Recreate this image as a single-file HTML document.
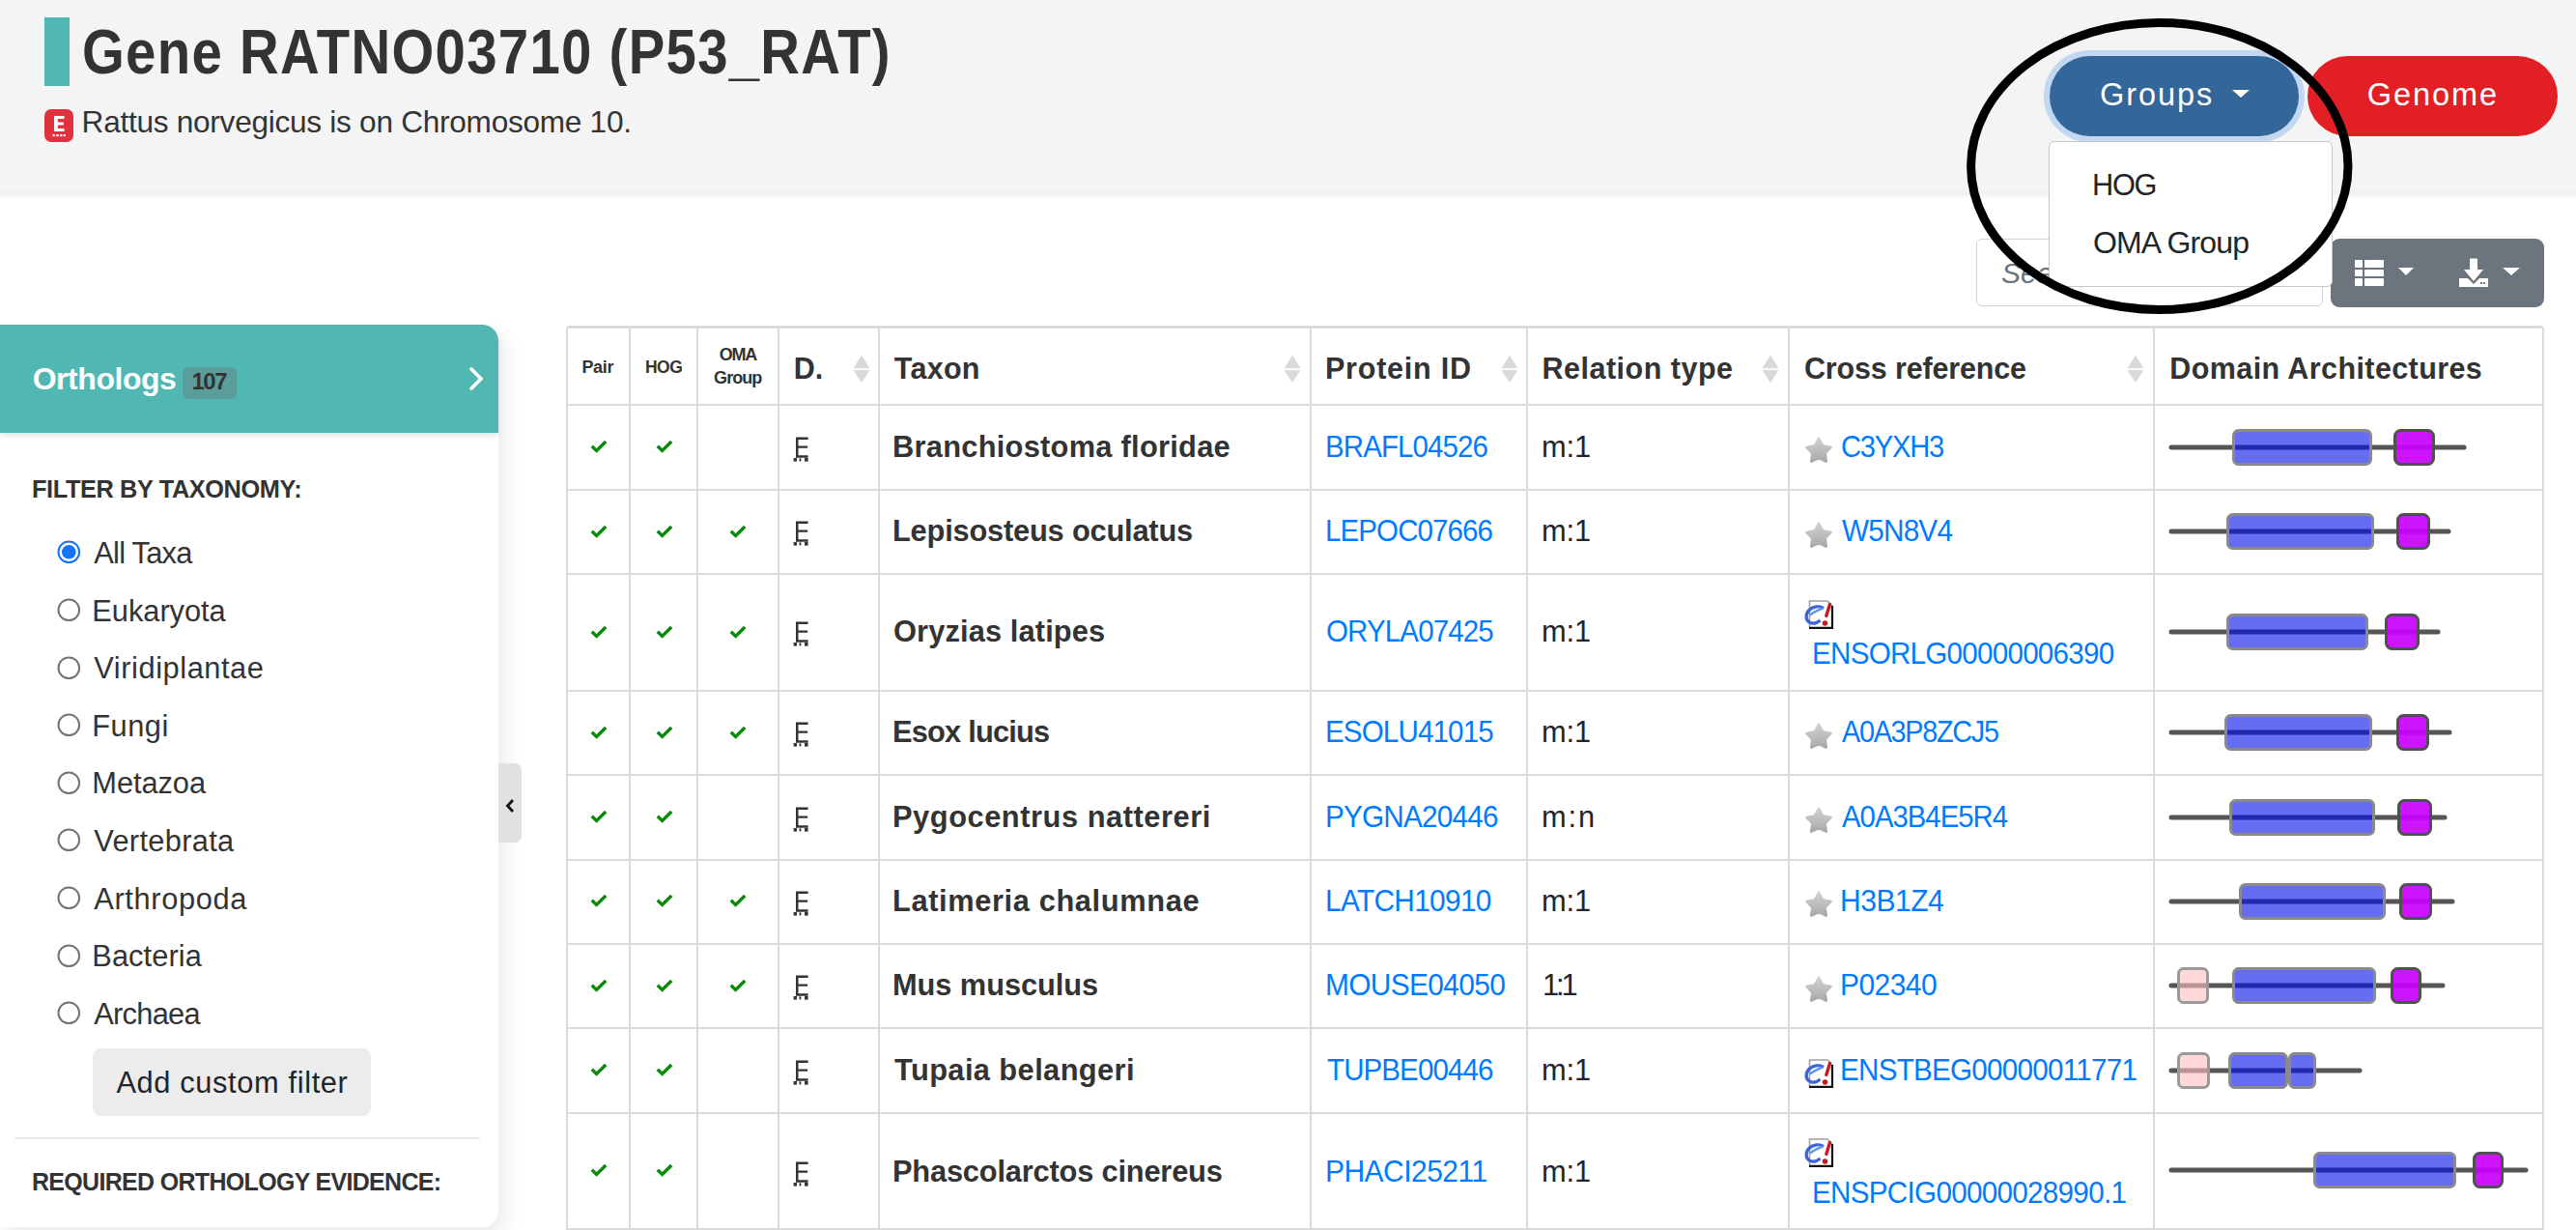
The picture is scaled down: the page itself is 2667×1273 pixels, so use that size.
<!DOCTYPE html>
<html><head><meta charset="utf-8"><title>Gene RATNO03710 (P53_RAT)</title>
<style>
html,body{margin:0;padding:0;width:2667px;height:1273px;overflow:hidden;background:#fff;}
#root{position:relative;width:2667px;height:1273px;overflow:hidden;background:#fff;font-family:"Liberation Sans",sans-serif;}
.t{position:absolute;line-height:1;white-space:nowrap;}
.b{position:absolute;}
svg{display:block;overflow:visible;}
</style></head><body><div id="root">
<div class="b" style="left:0px;top:0px;width:2667px;height:197px;background:#f4f4f4;"></div>
<div class="b" style="left:0px;top:197px;width:2667px;height:9px;background:linear-gradient(#f1f1f1,#f2f2f2 45%,#ffffff);"></div>
<div class="b" style="left:46px;top:18px;width:26px;height:71px;background:#51b7b2;"></div>
<div class="t" style="left:84.84px;top:22.42px;font-size:64px;font-weight:bold;color:#333;letter-spacing:1.476px;transform:scaleX(0.8800);transform-origin:0 0;">Gene RATNO03710 (P53_RAT)</div>
<div class="b" style="left:46px;top:113px;width:30px;height:34px;background:#e0313f;border-radius:7px;"></div>
<div class="b" style="left:53px;top:118px;width:16px;height:26px;"><svg width="16" height="26" viewBox="0 0 16 26"><path d="M3 2 H13.5 V5 H6.8 V8.6 H12.8 V11.4 H6.8 V15 H13.5 V18 H3 Z" fill="#fff"/><rect x="1.6" y="21" width="2.2" height="2.2" fill="#fff"/><rect x="5.4" y="21" width="2.2" height="2.2" fill="#fff"/><rect x="9.2" y="21" width="2.2" height="2.2" fill="#fff"/><rect x="12.6" y="21" width="2.2" height="2.2" fill="#fff"/></svg></div>
<div class="t" style="left:84.60px;top:111.05px;font-size:31.6px;color:#333;letter-spacing:-0.273px;">Rattus norvegicus is on Chromosome 10.</div>
<div class="b" style="left:2116px;top:52px;width:270px;height:94.5px;background:#c2d7f2;border-radius:47px;"></div>
<div class="b" style="left:2122px;top:58px;width:258px;height:82.5px;background:#336699;border-radius:41.25px;"></div>
<div class="t" style="left:2173.90px;top:82.29px;font-size:32.5px;color:#fff;letter-spacing:1.955px;">Groups</div>
<div class="b" style="left:2311px;top:93px;width:0;height:0;border-left:9.5px solid transparent;border-right:9.5px solid transparent;border-top:8px solid #fff;"></div>
<div class="b" style="left:2389px;top:57.5px;width:259px;height:83.5px;background:#e31f26;border-radius:41.75px;"></div>
<div class="t" style="left:2450.80px;top:82.29px;font-size:32.5px;color:#fff;letter-spacing:1.925px;">Genome</div>
<div class="b" style="left:2046px;top:247px;width:357px;height:68px;background:#fff;border:1px solid #ced4da;border-radius:6px;box-sizing:content-box;"></div>
<div class="t" style="left:2072.00px;top:267.61px;font-size:30px;font-style:italic;color:#6c757d;">Search</div>
<div class="b" style="left:2413px;top:247px;width:221px;height:71px;background:#6c757d;border-radius:9px;"></div>
<div class="b" style="left:2438px;top:269px;width:8px;height:8px;background:#fff;border-radius:1px;"></div>
<div class="b" style="left:2448px;top:269px;width:20px;height:8px;background:#fff;border-radius:1px;"></div>
<div class="b" style="left:2438px;top:279px;width:8px;height:7px;background:#fff;border-radius:1px;"></div>
<div class="b" style="left:2448px;top:279px;width:20px;height:7px;background:#fff;border-radius:1px;"></div>
<div class="b" style="left:2438px;top:288px;width:8px;height:8px;background:#fff;border-radius:1px;"></div>
<div class="b" style="left:2448px;top:288px;width:20px;height:8px;background:#fff;border-radius:1px;"></div>
<div class="b" style="left:2483px;top:277px;width:0;height:0;border-left:8.5px solid transparent;border-right:8.5px solid transparent;border-top:8px solid #fff;"></div>
<div class="b" style="left:2546px;top:267px;width:31px;height:31px;"><svg width="31" height="31" viewBox="0 0 31 31"><rect x="11" y="0.5" width="8" height="13" rx="1" fill="#fff"/><path d="M5 12 H25 L15 24 Z" fill="#fff"/><path d="M0 21 H9 L15 27 L21 21 H30 V30 H0 Z" fill="#fff"/><rect x="22" y="25" width="2" height="2" fill="#6c757d"/><rect x="25" y="25" width="2" height="2" fill="#6c757d"/></svg></div>
<div class="b" style="left:2591px;top:277px;width:0;height:0;border-left:9px solid transparent;border-right:9px solid transparent;border-top:8px solid #fff;"></div>
<div class="b" style="left:0px;top:336px;width:516px;height:934px;background:#fff;border-radius:0 17px 17px 0;box-shadow:6px 10px 22px rgba(0,0,0,0.085);"></div>
<div class="b" style="left:0px;top:336px;width:516px;height:112px;background:#51b7b2;border-radius:0 17px 0 0;box-shadow:0 3px 6px rgba(0,0,0,0.10);"></div>
<div class="t" style="left:33.70px;top:376.21px;font-size:32px;font-weight:bold;color:#fff;letter-spacing:-0.460px;">Orthologs</div>
<div class="b" style="left:189px;top:380px;width:56px;height:33px;background:#5a9e9b;border-radius:6px;"></div>
<div class="t" style="left:198.40px;top:382.68px;font-size:24px;font-weight:bold;color:#333;letter-spacing:-1.448px;">107</div>
<div class="b" style="left:485px;top:379px;"><svg width="18" height="26" viewBox="0 0 18 26"><path d="M3 3 L13 13 L3 23" stroke="#fff" stroke-width="3.6" fill="none" stroke-linecap="round"/></svg></div>
<div class="t" style="left:33.03px;top:493.29px;font-size:26px;font-weight:bold;color:#333;letter-spacing:-0.408px;transform:scaleX(0.9749);transform-origin:0 0;">FILTER BY TAXONOMY:</div>
<div class="b" style="left:59px;top:559.3px;width:24px;height:24px;"><svg width="24" height="24"><circle cx="12.3" cy="12.3" r="10.8" fill="#fff" stroke="#1473f7" stroke-width="2"/><circle cx="12.3" cy="12.3" r="7.3" fill="#1473f7"/></svg></div>
<div class="t" style="left:97.30px;top:558.03px;font-size:30.8px;color:#333;letter-spacing:-0.744px;">All Taxa</div>
<div class="b" style="left:59px;top:618.9px;width:24px;height:24px;"><svg width="24" height="24"><circle cx="12.3" cy="12.3" r="10.8" fill="#fff" stroke="#747474" stroke-width="2"/></svg></div>
<div class="t" style="left:95.30px;top:617.63px;font-size:30.8px;color:#333;letter-spacing:-0.029px;">Eukaryota</div>
<div class="b" style="left:59px;top:678.5px;width:24px;height:24px;"><svg width="24" height="24"><circle cx="12.3" cy="12.3" r="10.8" fill="#fff" stroke="#747474" stroke-width="2"/></svg></div>
<div class="t" style="left:97.30px;top:677.23px;font-size:30.8px;color:#333;letter-spacing:0.558px;">Viridiplantae</div>
<div class="b" style="left:59px;top:738.1px;width:24px;height:24px;"><svg width="24" height="24"><circle cx="12.3" cy="12.3" r="10.8" fill="#fff" stroke="#747474" stroke-width="2"/></svg></div>
<div class="t" style="left:95.30px;top:736.83px;font-size:30.8px;color:#333;letter-spacing:0.501px;">Fungi</div>
<div class="b" style="left:59px;top:797.7px;width:24px;height:24px;"><svg width="24" height="24"><circle cx="12.3" cy="12.3" r="10.8" fill="#fff" stroke="#747474" stroke-width="2"/></svg></div>
<div class="t" style="left:95.30px;top:796.43px;font-size:30.8px;color:#333;letter-spacing:-0.065px;">Metazoa</div>
<div class="b" style="left:59px;top:857.3px;width:24px;height:24px;"><svg width="24" height="24"><circle cx="12.3" cy="12.3" r="10.8" fill="#fff" stroke="#747474" stroke-width="2"/></svg></div>
<div class="t" style="left:97.30px;top:856.03px;font-size:30.8px;color:#333;letter-spacing:0.303px;">Vertebrata</div>
<div class="b" style="left:59px;top:916.9px;width:24px;height:24px;"><svg width="24" height="24"><circle cx="12.3" cy="12.3" r="10.8" fill="#fff" stroke="#747474" stroke-width="2"/></svg></div>
<div class="t" style="left:97.30px;top:915.63px;font-size:30.8px;color:#333;letter-spacing:0.628px;">Arthropoda</div>
<div class="b" style="left:59px;top:976.5px;width:24px;height:24px;"><svg width="24" height="24"><circle cx="12.3" cy="12.3" r="10.8" fill="#fff" stroke="#747474" stroke-width="2"/></svg></div>
<div class="t" style="left:95.30px;top:975.23px;font-size:30.8px;color:#333;letter-spacing:0.079px;">Bacteria</div>
<div class="b" style="left:59px;top:1036.1px;width:24px;height:24px;"><svg width="24" height="24"><circle cx="12.3" cy="12.3" r="10.8" fill="#fff" stroke="#747474" stroke-width="2"/></svg></div>
<div class="t" style="left:97.30px;top:1034.83px;font-size:30.8px;color:#333;letter-spacing:-0.746px;">Archaea</div>
<div class="b" style="left:96px;top:1085px;width:288px;height:70px;background:#ececec;border-radius:8px;"></div>
<div class="t" style="left:120.40px;top:1106.13px;font-size:30.8px;color:#212529;letter-spacing:0.631px;">Add custom filter</div>
<div class="b" style="left:15px;top:1177px;width:482px;height:2px;background:#e9ecef;"></div>
<div class="t" style="left:33.04px;top:1209.99px;font-size:26px;font-weight:bold;color:#333;letter-spacing:-0.683px;transform:scaleX(0.9597);transform-origin:0 0;">REQUIRED ORTHOLOGY EVIDENCE:</div>
<div class="b" style="left:516px;top:790px;width:24px;height:82px;background:#e0e1e3;border-radius:0 7px 7px 0;"></div>
<div class="b" style="left:522px;top:826px;"><svg width="12" height="16" viewBox="0 0 12 16"><path d="M9 2 L3.5 8 L9 14" stroke="#111" stroke-width="2.8" fill="none"/></svg></div>
<div class="b" style="left:586px;top:337px;width:2048px;height:1000px;border:2px solid #dadbdd;border-top:3px solid #dadbdd;border-radius:4px;box-sizing:border-box;background:#fff;"></div>
<div class="b" style="left:651px;top:338px;width:2px;height:935px;background:#dadbdd;"></div>
<div class="b" style="left:721px;top:338px;width:2px;height:935px;background:#dadbdd;"></div>
<div class="b" style="left:805px;top:338px;width:2px;height:935px;background:#dadbdd;"></div>
<div class="b" style="left:909px;top:338px;width:2px;height:935px;background:#dadbdd;"></div>
<div class="b" style="left:1356px;top:338px;width:2px;height:935px;background:#dadbdd;"></div>
<div class="b" style="left:1580px;top:338px;width:2px;height:935px;background:#dadbdd;"></div>
<div class="b" style="left:1851px;top:338px;width:2px;height:935px;background:#dadbdd;"></div>
<div class="b" style="left:2229px;top:338px;width:2px;height:935px;background:#dadbdd;"></div>
<div class="b" style="left:587px;top:418px;width:2046px;height:2px;background:#dadbdd;"></div>
<div class="b" style="left:587px;top:506px;width:2046px;height:2px;background:#dadbdd;"></div>
<div class="b" style="left:587px;top:593px;width:2046px;height:2px;background:#dadbdd;"></div>
<div class="b" style="left:587px;top:714px;width:2046px;height:2px;background:#dadbdd;"></div>
<div class="b" style="left:587px;top:801px;width:2046px;height:2px;background:#dadbdd;"></div>
<div class="b" style="left:587px;top:889px;width:2046px;height:2px;background:#dadbdd;"></div>
<div class="b" style="left:587px;top:976px;width:2046px;height:2px;background:#dadbdd;"></div>
<div class="b" style="left:587px;top:1063px;width:2046px;height:2px;background:#dadbdd;"></div>
<div class="b" style="left:587px;top:1151px;width:2046px;height:2px;background:#dadbdd;"></div>
<div class="b" style="left:587px;top:1271px;width:2046px;height:2px;background:#dadbdd;"></div>
<div class="t" style="left:602.40px;top:371.16px;font-size:18px;font-weight:bold;color:#333;letter-spacing:-0.273px;">Pair</div>
<div class="t" style="left:667.83px;top:371.16px;font-size:18px;font-weight:bold;color:#333;letter-spacing:-0.558px;transform:scaleX(0.9714);transform-origin:0 0;">HOG</div>
<div class="t" style="left:744.70px;top:358.26px;font-size:18px;font-weight:bold;color:#333;letter-spacing:-1.248px;">OMA</div>
<div class="t" style="left:739.10px;top:381.76px;font-size:18px;font-weight:bold;color:#333;letter-spacing:-0.949px;">Group</div>
<div class="t" style="left:821.70px;top:366.18px;font-size:30.5px;font-weight:bold;color:#333;letter-spacing:0.074px;">D.</div>
<div class="t" style="left:925.80px;top:365.78px;font-size:30.5px;font-weight:bold;color:#333;letter-spacing:0.269px;">Taxon</div>
<div class="t" style="left:1372.00px;top:365.78px;font-size:30.5px;font-weight:bold;color:#333;letter-spacing:0.776px;">Protein ID</div>
<div class="t" style="left:1596.50px;top:365.78px;font-size:30.5px;font-weight:bold;color:#333;letter-spacing:0.497px;">Relation type</div>
<div class="t" style="left:1868.00px;top:365.78px;font-size:30.5px;font-weight:bold;color:#333;letter-spacing:-0.164px;">Cross reference</div>
<div class="t" style="left:2246.30px;top:365.78px;font-size:30.5px;font-weight:bold;color:#333;letter-spacing:0.406px;">Domain Architectures</div>
<div class="b" style="left:883.5px;top:367.5px;"><svg width="16" height="28" viewBox="0 0 16 28"><path d="M8 0.3 L15.8 12.8 H0.2 Z" fill="#d9d9d9" stroke="#d9d9d9" stroke-width="0.8" stroke-linejoin="round"/><path d="M0.2 15.4 H15.8 L8 27.6 Z" fill="#d9d9d9" stroke="#d9d9d9" stroke-width="0.8" stroke-linejoin="round"/></svg></div>
<div class="b" style="left:1330px;top:367.5px;"><svg width="16" height="28" viewBox="0 0 16 28"><path d="M8 0.3 L15.8 12.8 H0.2 Z" fill="#d9d9d9" stroke="#d9d9d9" stroke-width="0.8" stroke-linejoin="round"/><path d="M0.2 15.4 H15.8 L8 27.6 Z" fill="#d9d9d9" stroke="#d9d9d9" stroke-width="0.8" stroke-linejoin="round"/></svg></div>
<div class="b" style="left:1554.5px;top:367.5px;"><svg width="16" height="28" viewBox="0 0 16 28"><path d="M8 0.3 L15.8 12.8 H0.2 Z" fill="#d9d9d9" stroke="#d9d9d9" stroke-width="0.8" stroke-linejoin="round"/><path d="M0.2 15.4 H15.8 L8 27.6 Z" fill="#d9d9d9" stroke="#d9d9d9" stroke-width="0.8" stroke-linejoin="round"/></svg></div>
<div class="b" style="left:1825px;top:367.5px;"><svg width="16" height="28" viewBox="0 0 16 28"><path d="M8 0.3 L15.8 12.8 H0.2 Z" fill="#d9d9d9" stroke="#d9d9d9" stroke-width="0.8" stroke-linejoin="round"/><path d="M0.2 15.4 H15.8 L8 27.6 Z" fill="#d9d9d9" stroke="#d9d9d9" stroke-width="0.8" stroke-linejoin="round"/></svg></div>
<div class="b" style="left:2203px;top:367.5px;"><svg width="16" height="28" viewBox="0 0 16 28"><path d="M8 0.3 L15.8 12.8 H0.2 Z" fill="#d9d9d9" stroke="#d9d9d9" stroke-width="0.8" stroke-linejoin="round"/><path d="M0.2 15.4 H15.8 L8 27.6 Z" fill="#d9d9d9" stroke="#d9d9d9" stroke-width="0.8" stroke-linejoin="round"/></svg></div>
<div class="b" style="left:611.0px;top:455.0px;"><svg width="18" height="14" viewBox="0 0 18 14"><path d="M1.8 6.8 L6.6 11.4 L16.2 2" stroke="#0a8a0a" stroke-width="3.4" fill="none"/></svg></div>
<div class="b" style="left:678.5px;top:455.0px;"><svg width="18" height="14" viewBox="0 0 18 14"><path d="M1.8 6.8 L6.6 11.4 L16.2 2" stroke="#0a8a0a" stroke-width="3.4" fill="none"/></svg></div>
<div class="b" style="left:821px;top:451.7px;"><svg width="17" height="27" viewBox="0 0 17 27"><path d="M3 0.6 H15.6 V3 H5.5 V9.4 H15.2 V11.8 H5.5 V19.3 H15.6 V21.8 H3 Z" fill="#333"/><rect x="0.6" y="22" width="3.4" height="3.6" fill="#333"/><rect x="6.5" y="22.4" width="1.9" height="3" fill="#333"/><rect x="12" y="22" width="3.6" height="3.6" fill="#333"/></svg></div>
<div class="t" style="left:924.00px;top:447.93px;font-size:30.8px;font-weight:bold;color:#333;letter-spacing:0.274px;">Branchiostoma floridae</div>
<div class="t" style="left:1372.09px;top:447.93px;font-size:30.8px;color:#007bff;letter-spacing:-0.896px;transform:scaleX(0.9556);transform-origin:0 0;">BRAFL04526</div>
<div class="t" style="left:1596.00px;top:447.93px;font-size:30.8px;color:#212529;letter-spacing:-0.105px;">m:1</div>
<div class="b" style="left:1868px;top:451.0px;"><svg width="30" height="29" viewBox="0 0 30 29"><defs><linearGradient id="sg" x1="0" y1="0" x2="0" y2="1"><stop offset="0" stop-color="#d0d0d0"/><stop offset="0.55" stop-color="#bcbcbc"/><stop offset="1" stop-color="#a8a8a8"/></linearGradient></defs><path d="M15.00 2.80 L19.11 10.34 L27.55 11.92 L21.66 18.16 L22.76 26.68 L15.00 23.00 L7.24 26.68 L8.34 18.16 L2.45 11.92 L10.89 10.34 Z" fill="url(#sg)" stroke="url(#sg)" stroke-width="2.6" stroke-linejoin="round"/></svg></div>
<div class="t" style="left:1905.56px;top:447.93px;font-size:30.8px;color:#007bff;letter-spacing:-1.295px;transform:scaleX(0.9450);transform-origin:0 0;">C3YXH3</div>
<div class="b" style="left:611.0px;top:542.5px;"><svg width="18" height="14" viewBox="0 0 18 14"><path d="M1.8 6.8 L6.6 11.4 L16.2 2" stroke="#0a8a0a" stroke-width="3.4" fill="none"/></svg></div>
<div class="b" style="left:678.5px;top:542.5px;"><svg width="18" height="14" viewBox="0 0 18 14"><path d="M1.8 6.8 L6.6 11.4 L16.2 2" stroke="#0a8a0a" stroke-width="3.4" fill="none"/></svg></div>
<div class="b" style="left:755.0px;top:542.5px;"><svg width="18" height="14" viewBox="0 0 18 14"><path d="M1.8 6.8 L6.6 11.4 L16.2 2" stroke="#0a8a0a" stroke-width="3.4" fill="none"/></svg></div>
<div class="b" style="left:821px;top:539.2px;"><svg width="17" height="27" viewBox="0 0 17 27"><path d="M3 0.6 H15.6 V3 H5.5 V9.4 H15.2 V11.8 H5.5 V19.3 H15.6 V21.8 H3 Z" fill="#333"/><rect x="0.6" y="22" width="3.4" height="3.6" fill="#333"/><rect x="6.5" y="22.4" width="1.9" height="3" fill="#333"/><rect x="12" y="22" width="3.6" height="3.6" fill="#333"/></svg></div>
<div class="t" style="left:924.00px;top:535.43px;font-size:30.8px;font-weight:bold;color:#333;letter-spacing:-0.198px;">Lepisosteus oculatus</div>
<div class="t" style="left:1372.09px;top:535.43px;font-size:30.8px;color:#007bff;letter-spacing:-0.904px;transform:scaleX(0.9565);transform-origin:0 0;">LEPOC07666</div>
<div class="t" style="left:1596.00px;top:535.43px;font-size:30.8px;color:#212529;letter-spacing:-0.105px;">m:1</div>
<div class="b" style="left:1868px;top:538.5px;"><svg width="30" height="29" viewBox="0 0 30 29"><defs><linearGradient id="sg" x1="0" y1="0" x2="0" y2="1"><stop offset="0" stop-color="#d0d0d0"/><stop offset="0.55" stop-color="#bcbcbc"/><stop offset="1" stop-color="#a8a8a8"/></linearGradient></defs><path d="M15.00 2.80 L19.11 10.34 L27.55 11.92 L21.66 18.16 L22.76 26.68 L15.00 23.00 L7.24 26.68 L8.34 18.16 L2.45 11.92 L10.89 10.34 Z" fill="url(#sg)" stroke="url(#sg)" stroke-width="2.6" stroke-linejoin="round"/></svg></div>
<div class="t" style="left:1906.50px;top:535.43px;font-size:30.8px;color:#007bff;letter-spacing:-0.845px;transform:scaleX(0.9657);transform-origin:0 0;">W5N8V4</div>
<div class="b" style="left:611.0px;top:646.5px;"><svg width="18" height="14" viewBox="0 0 18 14"><path d="M1.8 6.8 L6.6 11.4 L16.2 2" stroke="#0a8a0a" stroke-width="3.4" fill="none"/></svg></div>
<div class="b" style="left:678.5px;top:646.5px;"><svg width="18" height="14" viewBox="0 0 18 14"><path d="M1.8 6.8 L6.6 11.4 L16.2 2" stroke="#0a8a0a" stroke-width="3.4" fill="none"/></svg></div>
<div class="b" style="left:755.0px;top:646.5px;"><svg width="18" height="14" viewBox="0 0 18 14"><path d="M1.8 6.8 L6.6 11.4 L16.2 2" stroke="#0a8a0a" stroke-width="3.4" fill="none"/></svg></div>
<div class="b" style="left:821px;top:643.2px;"><svg width="17" height="27" viewBox="0 0 17 27"><path d="M3 0.6 H15.6 V3 H5.5 V9.4 H15.2 V11.8 H5.5 V19.3 H15.6 V21.8 H3 Z" fill="#333"/><rect x="0.6" y="22" width="3.4" height="3.6" fill="#333"/><rect x="6.5" y="22.4" width="1.9" height="3" fill="#333"/><rect x="12" y="22" width="3.6" height="3.6" fill="#333"/></svg></div>
<div class="t" style="left:925.00px;top:639.43px;font-size:30.8px;font-weight:bold;color:#333;letter-spacing:0.124px;">Oryzias latipes</div>
<div class="t" style="left:1373.04px;top:639.43px;font-size:30.8px;color:#007bff;letter-spacing:-0.889px;transform:scaleX(0.9573);transform-origin:0 0;">ORYLA07425</div>
<div class="t" style="left:1596.00px;top:639.43px;font-size:30.8px;color:#212529;letter-spacing:-0.105px;">m:1</div>
<div class="b" style="left:1868px;top:620.5px;"><svg width="30" height="30" viewBox="0 0 30 30"><path d="M5.5 1 H24 L29 6 V29 H5.5 Z" fill="#fff"/><path d="M5.5 29 V1 H24 L29 6" stroke="#a0a0a0" stroke-width="1.6" fill="none"/><path d="M5 28.8 H29 V6" stroke="#111" stroke-width="2.2" fill="none"/><path d="M20 8.5 C16 5.5 9 6.5 5 10.5 C1 14.5 1.2 20.5 5.5 23.2 C9 25.2 13 24 16.5 21" stroke="#3d63d6" stroke-width="3.2" fill="none"/><path d="M6 15.5 C10 12 15 10 19.5 8.3" stroke="#5a94f2" stroke-width="2.4" fill="none"/><path d="M26.5 4.5 L22.8 16.5" stroke="#c61c1c" stroke-width="3.4" stroke-linecap="round"/><circle cx="21.5" cy="24" r="2.8" fill="#c61c1c"/></svg></div>
<div class="t" style="left:1875.68px;top:662.43px;font-size:30.8px;color:#007bff;letter-spacing:-0.770px;transform:scaleX(0.9610);transform-origin:0 0;">ENSORLG00000006390</div>
<div class="b" style="left:611.0px;top:750.5px;"><svg width="18" height="14" viewBox="0 0 18 14"><path d="M1.8 6.8 L6.6 11.4 L16.2 2" stroke="#0a8a0a" stroke-width="3.4" fill="none"/></svg></div>
<div class="b" style="left:678.5px;top:750.5px;"><svg width="18" height="14" viewBox="0 0 18 14"><path d="M1.8 6.8 L6.6 11.4 L16.2 2" stroke="#0a8a0a" stroke-width="3.4" fill="none"/></svg></div>
<div class="b" style="left:755.0px;top:750.5px;"><svg width="18" height="14" viewBox="0 0 18 14"><path d="M1.8 6.8 L6.6 11.4 L16.2 2" stroke="#0a8a0a" stroke-width="3.4" fill="none"/></svg></div>
<div class="b" style="left:821px;top:747.2px;"><svg width="17" height="27" viewBox="0 0 17 27"><path d="M3 0.6 H15.6 V3 H5.5 V9.4 H15.2 V11.8 H5.5 V19.3 H15.6 V21.8 H3 Z" fill="#333"/><rect x="0.6" y="22" width="3.4" height="3.6" fill="#333"/><rect x="6.5" y="22.4" width="1.9" height="3" fill="#333"/><rect x="12" y="22" width="3.6" height="3.6" fill="#333"/></svg></div>
<div class="t" style="left:924.00px;top:743.43px;font-size:30.8px;font-weight:bold;color:#333;letter-spacing:-0.803px;">Esox lucius</div>
<div class="t" style="left:1372.08px;top:743.43px;font-size:30.8px;color:#007bff;letter-spacing:-0.863px;transform:scaleX(0.9584);transform-origin:0 0;">ESOLU41015</div>
<div class="t" style="left:1596.00px;top:743.43px;font-size:30.8px;color:#212529;letter-spacing:-0.105px;">m:1</div>
<div class="b" style="left:1868px;top:746.5px;"><svg width="30" height="29" viewBox="0 0 30 29"><defs><linearGradient id="sg" x1="0" y1="0" x2="0" y2="1"><stop offset="0" stop-color="#d0d0d0"/><stop offset="0.55" stop-color="#bcbcbc"/><stop offset="1" stop-color="#a8a8a8"/></linearGradient></defs><path d="M15.00 2.80 L19.11 10.34 L27.55 11.92 L21.66 18.16 L22.76 26.68 L15.00 23.00 L7.24 26.68 L8.34 18.16 L2.45 11.92 L10.89 10.34 Z" fill="url(#sg)" stroke="url(#sg)" stroke-width="2.6" stroke-linejoin="round"/></svg></div>
<div class="t" style="left:1906.50px;top:743.43px;font-size:30.8px;color:#007bff;letter-spacing:-1.353px;transform:scaleX(0.9343);transform-origin:0 0;">A0A3P8ZCJ5</div>
<div class="b" style="left:611.0px;top:838.0px;"><svg width="18" height="14" viewBox="0 0 18 14"><path d="M1.8 6.8 L6.6 11.4 L16.2 2" stroke="#0a8a0a" stroke-width="3.4" fill="none"/></svg></div>
<div class="b" style="left:678.5px;top:838.0px;"><svg width="18" height="14" viewBox="0 0 18 14"><path d="M1.8 6.8 L6.6 11.4 L16.2 2" stroke="#0a8a0a" stroke-width="3.4" fill="none"/></svg></div>
<div class="b" style="left:821px;top:834.7px;"><svg width="17" height="27" viewBox="0 0 17 27"><path d="M3 0.6 H15.6 V3 H5.5 V9.4 H15.2 V11.8 H5.5 V19.3 H15.6 V21.8 H3 Z" fill="#333"/><rect x="0.6" y="22" width="3.4" height="3.6" fill="#333"/><rect x="6.5" y="22.4" width="1.9" height="3" fill="#333"/><rect x="12" y="22" width="3.6" height="3.6" fill="#333"/></svg></div>
<div class="t" style="left:924.00px;top:830.93px;font-size:30.8px;font-weight:bold;color:#333;letter-spacing:0.551px;">Pygocentrus nattereri</div>
<div class="t" style="left:1372.07px;top:830.93px;font-size:30.8px;color:#007bff;letter-spacing:-0.783px;transform:scaleX(0.9630);transform-origin:0 0;">PYGNA20446</div>
<div class="t" style="left:1596.00px;top:830.93px;font-size:30.8px;color:#212529;letter-spacing:1.895px;">m:n</div>
<div class="b" style="left:1868px;top:834.0px;"><svg width="30" height="29" viewBox="0 0 30 29"><defs><linearGradient id="sg" x1="0" y1="0" x2="0" y2="1"><stop offset="0" stop-color="#d0d0d0"/><stop offset="0.55" stop-color="#bcbcbc"/><stop offset="1" stop-color="#a8a8a8"/></linearGradient></defs><path d="M15.00 2.80 L19.11 10.34 L27.55 11.92 L21.66 18.16 L22.76 26.68 L15.00 23.00 L7.24 26.68 L8.34 18.16 L2.45 11.92 L10.89 10.34 Z" fill="url(#sg)" stroke="url(#sg)" stroke-width="2.6" stroke-linejoin="round"/></svg></div>
<div class="t" style="left:1906.50px;top:830.93px;font-size:30.8px;color:#007bff;letter-spacing:-1.026px;transform:scaleX(0.9514);transform-origin:0 0;">A0A3B4E5R4</div>
<div class="b" style="left:611.0px;top:925.2px;"><svg width="18" height="14" viewBox="0 0 18 14"><path d="M1.8 6.8 L6.6 11.4 L16.2 2" stroke="#0a8a0a" stroke-width="3.4" fill="none"/></svg></div>
<div class="b" style="left:678.5px;top:925.2px;"><svg width="18" height="14" viewBox="0 0 18 14"><path d="M1.8 6.8 L6.6 11.4 L16.2 2" stroke="#0a8a0a" stroke-width="3.4" fill="none"/></svg></div>
<div class="b" style="left:755.0px;top:925.2px;"><svg width="18" height="14" viewBox="0 0 18 14"><path d="M1.8 6.8 L6.6 11.4 L16.2 2" stroke="#0a8a0a" stroke-width="3.4" fill="none"/></svg></div>
<div class="b" style="left:821px;top:921.9px;"><svg width="17" height="27" viewBox="0 0 17 27"><path d="M3 0.6 H15.6 V3 H5.5 V9.4 H15.2 V11.8 H5.5 V19.3 H15.6 V21.8 H3 Z" fill="#333"/><rect x="0.6" y="22" width="3.4" height="3.6" fill="#333"/><rect x="6.5" y="22.4" width="1.9" height="3" fill="#333"/><rect x="12" y="22" width="3.6" height="3.6" fill="#333"/></svg></div>
<div class="t" style="left:924.00px;top:918.13px;font-size:30.8px;font-weight:bold;color:#333;letter-spacing:0.620px;">Latimeria chalumnae</div>
<div class="t" style="left:1372.07px;top:918.13px;font-size:30.8px;color:#007bff;letter-spacing:-0.666px;transform:scaleX(0.9669);transform-origin:0 0;">LATCH10910</div>
<div class="t" style="left:1596.00px;top:918.13px;font-size:30.8px;color:#212529;letter-spacing:-0.105px;">m:1</div>
<div class="b" style="left:1868px;top:921.2px;"><svg width="30" height="29" viewBox="0 0 30 29"><defs><linearGradient id="sg" x1="0" y1="0" x2="0" y2="1"><stop offset="0" stop-color="#d0d0d0"/><stop offset="0.55" stop-color="#bcbcbc"/><stop offset="1" stop-color="#a8a8a8"/></linearGradient></defs><path d="M15.00 2.80 L19.11 10.34 L27.55 11.92 L21.66 18.16 L22.76 26.68 L15.00 23.00 L7.24 26.68 L8.34 18.16 L2.45 11.92 L10.89 10.34 Z" fill="url(#sg)" stroke="url(#sg)" stroke-width="2.6" stroke-linejoin="round"/></svg></div>
<div class="t" style="left:1904.55px;top:918.13px;font-size:30.8px;color:#007bff;letter-spacing:-0.521px;transform:scaleX(0.9765);transform-origin:0 0;">H3B1Z4</div>
<div class="b" style="left:611.0px;top:1012.5px;"><svg width="18" height="14" viewBox="0 0 18 14"><path d="M1.8 6.8 L6.6 11.4 L16.2 2" stroke="#0a8a0a" stroke-width="3.4" fill="none"/></svg></div>
<div class="b" style="left:678.5px;top:1012.5px;"><svg width="18" height="14" viewBox="0 0 18 14"><path d="M1.8 6.8 L6.6 11.4 L16.2 2" stroke="#0a8a0a" stroke-width="3.4" fill="none"/></svg></div>
<div class="b" style="left:755.0px;top:1012.5px;"><svg width="18" height="14" viewBox="0 0 18 14"><path d="M1.8 6.8 L6.6 11.4 L16.2 2" stroke="#0a8a0a" stroke-width="3.4" fill="none"/></svg></div>
<div class="b" style="left:821px;top:1009.2px;"><svg width="17" height="27" viewBox="0 0 17 27"><path d="M3 0.6 H15.6 V3 H5.5 V9.4 H15.2 V11.8 H5.5 V19.3 H15.6 V21.8 H3 Z" fill="#333"/><rect x="0.6" y="22" width="3.4" height="3.6" fill="#333"/><rect x="6.5" y="22.4" width="1.9" height="3" fill="#333"/><rect x="12" y="22" width="3.6" height="3.6" fill="#333"/></svg></div>
<div class="t" style="left:924.00px;top:1005.43px;font-size:30.8px;font-weight:bold;color:#333;letter-spacing:-0.071px;">Mus musculus</div>
<div class="t" style="left:1372.06px;top:1005.43px;font-size:30.8px;color:#007bff;letter-spacing:-0.657px;transform:scaleX(0.9698);transform-origin:0 0;">MOUSE04050</div>
<div class="t" style="left:1597.00px;top:1005.43px;font-size:30.8px;color:#212529;letter-spacing:-3.092px;">1:1</div>
<div class="b" style="left:1868px;top:1008.5px;"><svg width="30" height="29" viewBox="0 0 30 29"><defs><linearGradient id="sg" x1="0" y1="0" x2="0" y2="1"><stop offset="0" stop-color="#d0d0d0"/><stop offset="0.55" stop-color="#bcbcbc"/><stop offset="1" stop-color="#a8a8a8"/></linearGradient></defs><path d="M15.00 2.80 L19.11 10.34 L27.55 11.92 L21.66 18.16 L22.76 26.68 L15.00 23.00 L7.24 26.68 L8.34 18.16 L2.45 11.92 L10.89 10.34 Z" fill="url(#sg)" stroke="url(#sg)" stroke-width="2.6" stroke-linejoin="round"/></svg></div>
<div class="t" style="left:1904.55px;top:1005.43px;font-size:30.8px;color:#007bff;letter-spacing:-0.563px;transform:scaleX(0.9727);transform-origin:0 0;">P02340</div>
<div class="b" style="left:611.0px;top:1100.0px;"><svg width="18" height="14" viewBox="0 0 18 14"><path d="M1.8 6.8 L6.6 11.4 L16.2 2" stroke="#0a8a0a" stroke-width="3.4" fill="none"/></svg></div>
<div class="b" style="left:678.5px;top:1100.0px;"><svg width="18" height="14" viewBox="0 0 18 14"><path d="M1.8 6.8 L6.6 11.4 L16.2 2" stroke="#0a8a0a" stroke-width="3.4" fill="none"/></svg></div>
<div class="b" style="left:821px;top:1096.7px;"><svg width="17" height="27" viewBox="0 0 17 27"><path d="M3 0.6 H15.6 V3 H5.5 V9.4 H15.2 V11.8 H5.5 V19.3 H15.6 V21.8 H3 Z" fill="#333"/><rect x="0.6" y="22" width="3.4" height="3.6" fill="#333"/><rect x="6.5" y="22.4" width="1.9" height="3" fill="#333"/><rect x="12" y="22" width="3.6" height="3.6" fill="#333"/></svg></div>
<div class="t" style="left:926.00px;top:1092.93px;font-size:30.8px;font-weight:bold;color:#333;letter-spacing:0.408px;">Tupaia belangeri</div>
<div class="t" style="left:1374.00px;top:1092.93px;font-size:30.8px;color:#007bff;letter-spacing:-0.902px;transform:scaleX(0.9566);transform-origin:0 0;">TUPBE00446</div>
<div class="t" style="left:1596.00px;top:1092.93px;font-size:30.8px;color:#212529;letter-spacing:-0.105px;">m:1</div>
<div class="b" style="left:1868px;top:1096.0px;"><svg width="30" height="30" viewBox="0 0 30 30"><path d="M5.5 1 H24 L29 6 V29 H5.5 Z" fill="#fff"/><path d="M5.5 29 V1 H24 L29 6" stroke="#a0a0a0" stroke-width="1.6" fill="none"/><path d="M5 28.8 H29 V6" stroke="#111" stroke-width="2.2" fill="none"/><path d="M20 8.5 C16 5.5 9 6.5 5 10.5 C1 14.5 1.2 20.5 5.5 23.2 C9 25.2 13 24 16.5 21" stroke="#3d63d6" stroke-width="3.2" fill="none"/><path d="M6 15.5 C10 12 15 10 19.5 8.3" stroke="#5a94f2" stroke-width="2.4" fill="none"/><path d="M26.5 4.5 L22.8 16.5" stroke="#c61c1c" stroke-width="3.4" stroke-linecap="round"/><circle cx="21.5" cy="24" r="2.8" fill="#c61c1c"/></svg></div>
<div class="t" style="left:1904.58px;top:1092.93px;font-size:30.8px;color:#007bff;letter-spacing:-0.755px;transform:scaleX(0.9611);transform-origin:0 0;">ENSTBEG00000011771</div>
<div class="b" style="left:611.0px;top:1203.8px;"><svg width="18" height="14" viewBox="0 0 18 14"><path d="M1.8 6.8 L6.6 11.4 L16.2 2" stroke="#0a8a0a" stroke-width="3.4" fill="none"/></svg></div>
<div class="b" style="left:678.5px;top:1203.8px;"><svg width="18" height="14" viewBox="0 0 18 14"><path d="M1.8 6.8 L6.6 11.4 L16.2 2" stroke="#0a8a0a" stroke-width="3.4" fill="none"/></svg></div>
<div class="b" style="left:821px;top:1202.2px;"><svg width="17" height="27" viewBox="0 0 17 27"><path d="M3 0.6 H15.6 V3 H5.5 V9.4 H15.2 V11.8 H5.5 V19.3 H15.6 V21.8 H3 Z" fill="#333"/><rect x="0.6" y="22" width="3.4" height="3.6" fill="#333"/><rect x="6.5" y="22.4" width="1.9" height="3" fill="#333"/><rect x="12" y="22" width="3.6" height="3.6" fill="#333"/></svg></div>
<div class="t" style="left:924.00px;top:1198.43px;font-size:30.8px;font-weight:bold;color:#333;letter-spacing:-0.188px;">Phascolarctos cinereus</div>
<div class="t" style="left:1372.05px;top:1198.43px;font-size:30.8px;color:#007bff;letter-spacing:-0.526px;transform:scaleX(0.9728);transform-origin:0 0;">PHACI25211</div>
<div class="t" style="left:1596.00px;top:1198.43px;font-size:30.8px;color:#212529;letter-spacing:-0.105px;">m:1</div>
<div class="b" style="left:1868px;top:1177.8px;"><svg width="30" height="30" viewBox="0 0 30 30"><path d="M5.5 1 H24 L29 6 V29 H5.5 Z" fill="#fff"/><path d="M5.5 29 V1 H24 L29 6" stroke="#a0a0a0" stroke-width="1.6" fill="none"/><path d="M5 28.8 H29 V6" stroke="#111" stroke-width="2.2" fill="none"/><path d="M20 8.5 C16 5.5 9 6.5 5 10.5 C1 14.5 1.2 20.5 5.5 23.2 C9 25.2 13 24 16.5 21" stroke="#3d63d6" stroke-width="3.2" fill="none"/><path d="M6 15.5 C10 12 15 10 19.5 8.3" stroke="#5a94f2" stroke-width="2.4" fill="none"/><path d="M26.5 4.5 L22.8 16.5" stroke="#c61c1c" stroke-width="3.4" stroke-linecap="round"/><circle cx="21.5" cy="24" r="2.8" fill="#c61c1c"/></svg></div>
<div class="t" style="left:1875.68px;top:1219.73px;font-size:30.8px;color:#007bff;letter-spacing:-0.716px;transform:scaleX(0.9611);transform-origin:0 0;">ENSPCIG00000028990.1</div>
<div class="b" style="left:2240px;top:438.5px;"><svg width="400" height="48" viewBox="2240 438.5 400 48"><line x1="2248" y1="462.5" x2="2551" y2="462.5" stroke="#555" stroke-width="5" stroke-linecap="round"/><rect x="2312.5" y="445.0" width="142" height="35" rx="5" fill="rgba(0,12,235,0.6)" stroke="#8a8a8a" stroke-width="3"/><rect x="2479.5" y="445.0" width="40" height="35" rx="6" fill="rgba(200,0,255,0.92)" stroke="#505050" stroke-width="3"/></svg></div>
<div class="b" style="left:2240px;top:526.0px;"><svg width="400" height="48" viewBox="2240 526.0 400 48"><line x1="2248" y1="550" x2="2535" y2="550" stroke="#555" stroke-width="5" stroke-linecap="round"/><rect x="2306.5" y="532.5" width="150" height="35" rx="5" fill="rgba(0,12,235,0.6)" stroke="#8a8a8a" stroke-width="3"/><rect x="2482.5" y="532.5" width="32" height="35" rx="6" fill="rgba(200,0,255,0.92)" stroke="#505050" stroke-width="3"/></svg></div>
<div class="b" style="left:2240px;top:630.0px;"><svg width="400" height="48" viewBox="2240 630.0 400 48"><line x1="2248" y1="654" x2="2524" y2="654" stroke="#555" stroke-width="5" stroke-linecap="round"/><rect x="2306.5" y="636.5" width="144" height="35" rx="5" fill="rgba(0,12,235,0.6)" stroke="#8a8a8a" stroke-width="3"/><rect x="2470.5" y="636.5" width="33" height="35" rx="6" fill="rgba(200,0,255,0.92)" stroke="#505050" stroke-width="3"/></svg></div>
<div class="b" style="left:2240px;top:734.0px;"><svg width="400" height="48" viewBox="2240 734.0 400 48"><line x1="2248" y1="758" x2="2536" y2="758" stroke="#555" stroke-width="5" stroke-linecap="round"/><rect x="2304.5" y="740.5" width="150" height="35" rx="5" fill="rgba(0,12,235,0.6)" stroke="#8a8a8a" stroke-width="3"/><rect x="2482.5" y="740.5" width="31" height="35" rx="6" fill="rgba(200,0,255,0.92)" stroke="#505050" stroke-width="3"/></svg></div>
<div class="b" style="left:2240px;top:821.5px;"><svg width="400" height="48" viewBox="2240 821.5 400 48"><line x1="2248" y1="845.5" x2="2531" y2="845.5" stroke="#555" stroke-width="5" stroke-linecap="round"/><rect x="2309.5" y="828.0" width="148" height="35" rx="5" fill="rgba(0,12,235,0.6)" stroke="#8a8a8a" stroke-width="3"/><rect x="2483.5" y="828.0" width="33" height="35" rx="6" fill="rgba(200,0,255,0.92)" stroke="#505050" stroke-width="3"/></svg></div>
<div class="b" style="left:2240px;top:908.7px;"><svg width="400" height="48" viewBox="2240 908.7 400 48"><line x1="2248" y1="932.7" x2="2539" y2="932.7" stroke="#555" stroke-width="5" stroke-linecap="round"/><rect x="2319.5" y="915.2" width="149" height="35" rx="5" fill="rgba(0,12,235,0.6)" stroke="#8a8a8a" stroke-width="3"/><rect x="2485.5" y="915.2" width="31" height="35" rx="6" fill="rgba(200,0,255,0.92)" stroke="#505050" stroke-width="3"/></svg></div>
<div class="b" style="left:2240px;top:996.0px;"><svg width="400" height="48" viewBox="2240 996.0 400 48"><line x1="2248" y1="1020" x2="2529" y2="1020" stroke="#555" stroke-width="5" stroke-linecap="round"/><rect x="2255.5" y="1002.5" width="30" height="35" rx="5" fill="rgba(255,190,190,0.6)" stroke="#999" stroke-width="3"/><rect x="2312.5" y="1002.5" width="146" height="35" rx="5" fill="rgba(0,12,235,0.6)" stroke="#8a8a8a" stroke-width="3"/><rect x="2476.5" y="1002.5" width="29" height="35" rx="6" fill="rgba(200,0,255,0.92)" stroke="#505050" stroke-width="3"/></svg></div>
<div class="b" style="left:2240px;top:1083.5px;"><svg width="400" height="48" viewBox="2240 1083.5 400 48"><line x1="2248" y1="1107.5" x2="2443" y2="1107.5" stroke="#555" stroke-width="5" stroke-linecap="round"/><rect x="2255.5" y="1090.0" width="31" height="35" rx="5" fill="rgba(255,190,190,0.6)" stroke="#999" stroke-width="3"/><rect x="2308.5" y="1090.0" width="59" height="35" rx="5" fill="rgba(0,12,235,0.6)" stroke="#8a8a8a" stroke-width="3"/><rect x="2370.5" y="1090.0" width="26" height="35" rx="5" fill="rgba(0,12,235,0.6)" stroke="#8a8a8a" stroke-width="3"/></svg></div>
<div class="b" style="left:2240px;top:1187.3px;"><svg width="400" height="48" viewBox="2240 1187.3 400 48"><line x1="2248" y1="1211.3" x2="2615" y2="1211.3" stroke="#555" stroke-width="5" stroke-linecap="round"/><rect x="2396.5" y="1193.8" width="145" height="35" rx="5" fill="rgba(0,12,235,0.6)" stroke="#8a8a8a" stroke-width="3"/><rect x="2561.5" y="1193.8" width="29" height="35" rx="6" fill="rgba(200,0,255,0.92)" stroke="#505050" stroke-width="3"/></svg></div>
<div class="b" style="left:2121px;top:145.5px;width:294px;height:151px;background:#fff;border:1px solid #c8c8c8;border-radius:6px;box-sizing:border-box;"></div>
<div class="t" style="left:2166.08px;top:175.21px;font-size:32px;color:#212529;letter-spacing:-1.351px;transform:scaleX(0.9608);transform-origin:0 0;">HOG</div>
<div class="t" style="left:2167.00px;top:234.51px;font-size:32px;color:#212529;letter-spacing:-0.865px;">OMA Group</div>
<div class="b" style="left:2000px;top:0;"><svg width="500" height="340" viewBox="2000 0 500 340"><ellipse cx="2235.8" cy="172" rx="195.2" ry="148.5" fill="none" stroke="#000" stroke-width="9"/></svg></div>

</div></body></html>
